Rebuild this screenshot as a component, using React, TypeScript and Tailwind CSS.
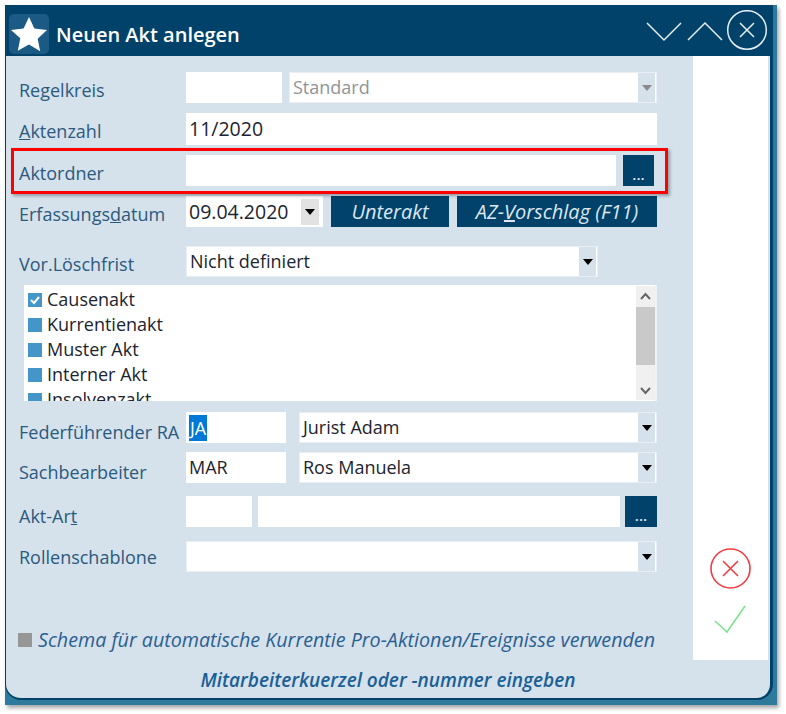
import type { ReactNode } from 'react'

const font = { fontFamily: '"Open Sans", "Noto Sans", sans-serif' }

function Label({ children, className = 'pt-[6px]' }: { children: ReactNode; className?: string }) {
  return (
    <div className={`w-[180px] h-[31px] shrink-0 pl-[13px] text-[18px] leading-[25px] text-[#2b5a7f] whitespace-nowrap ${className}`}>
      {children}
    </div>
  )
}

function Field({ className, children }: { className: string; children?: ReactNode }) {
  return (
    <div className={`h-[31px] shrink-0 bg-white flex items-center pl-[3px] text-[18px] text-[#1c2430] ${className}`}>
      {children}
    </div>
  )
}

function Arrow({ muted }: { muted?: boolean }) {
  return (
    <svg width="12" height="6" viewBox="0 0 12 6">
      <path d="M1 0h10L6 6z" fill={muted ? '#8a8a8a' : '#000'} />
    </svg>
  )
}

function Combo({ className, text, muted }: { className: string; text?: string; muted?: boolean }) {
  return (
    <div className={`h-[31px] shrink-0 bg-white border border-[#e9eff4] flex items-center justify-between text-[18px] ${className}`}>
      <span className={`pl-[3px] ${muted ? 'text-[#8f9499]' : 'text-[#1c2430]'}`}>{text}</span>
      <span className="w-[17px] h-full bg-[#d5e1eb] flex items-center justify-center mr-[1px]">
        <Arrow muted={muted} />
      </span>
    </div>
  )
}

function DotsButton({ className }: { className: string }) {
  return (
    <div className={`h-[31px] shrink-0 bg-[#01426a] text-[#dfe9f1] flex items-end justify-center pb-[2px] text-[15px] font-semibold leading-[20px] ${className}`}>
      ...
    </div>
  )
}

function ActionButton({ className, children }: { className: string; children: ReactNode }) {
  return (
    <div className={`h-[31px] shrink-0 bg-[#01426a] text-[#dce7f0] flex items-center justify-center text-[20px] italic ${className}`}>
      {children}
    </div>
  )
}

const listItems = ['Causenakt', 'Kurrentienakt', 'Muster Akt', 'Interner Akt', 'Insolvenzakt']

export default function App() {
  return (
    <div className="w-[786px] h-[714px] bg-white pt-[5px] pl-[5px] overflow-hidden" style={font}>
      <div className="w-[772px] h-[700px] bg-[#2e7a9c] shadow-[2px_3px_4px_rgba(0,0,0,0.35)]">
        {/* Title bar */}
        <div className="w-[768px] h-[51px] bg-[#01426a] flex items-center">
          <div className="ml-[4px] mt-[7px] w-[40px] h-[40px] rounded-[5px] bg-[#1b5a85] flex items-center justify-center">
            <svg width="38" height="36" viewBox="0 0 38 36">
              <path d="M19 1l5.4 11.6 12.6 1.5-9.3 8.7 2.5 12.5L19 28.6 7.8 34.8l2.5-12.5L1 14.1l12.6-1.5z" fill="#fff" />
            </svg>
          </div>
          <span className="ml-[7px] mt-[8px] text-[20px] font-semibold text-white">Neuen Akt anlegen</span>
          <svg className="ml-auto mr-[5px]" width="122" height="42" viewBox="0 0 122 42" fill="none" stroke="#e6eef4" strokeWidth="1.5">
            <path d="M1 13l17 17 17-17" />
            <path d="M42 30l17-17 17 17" />
            <circle cx="101" cy="20" r="19.3" />
            <path d="M94 13l14 14M108 13L94 27" />
          </svg>
        </div>

        {/* Body */}
        <div className="w-[768px] h-[644px] bg-[#d5e1eb] border-x border-b-2 border-[#01426a] border-r-[3px] rounded-b-[16px] flex flex-col">
          <div className="h-[604px] flex shrink-0">
            <div className="w-[687px] pt-[16px]">
              <div className="flex">
                <Label>Regelkreis</Label>
                <Field className="w-[96px]" />
                <Combo className="w-[368px] ml-[7px]" text="Standard" muted />
              </div>
              <div className="flex mt-[10px]">
                <Label>
                  <u>A</u>ktenzahl
                </Label>
                <Field className="w-[471px] !h-[32px] text-[19.5px]">11/2020</Field>
              </div>
              <div className="flex mt-[10px]">
                <Label>Aktordner</Label>
                <Field className="w-[430px]" />
                <DotsButton className="w-[31px] ml-[7px]" />
              </div>
              <div className="flex mt-[10px]">
                <Label>
                  Erfassungs<u>d</u>atum
                </Label>
                <Field className="w-[137px] justify-between pr-[4px] text-[19.5px]">
                  09.04.2020
                  <span className="w-[18px] h-[26px] bg-[#e2e2e2] flex items-center justify-center">
                    <Arrow />
                  </span>
                </Field>
                <ActionButton className="w-[118px] ml-[8px]">Unterakt</ActionButton>
                <ActionButton className="w-[200px] ml-[8px]">
                  <span>
                    AZ-<u>V</u>orschlag (F11)
                  </span>
                </ActionButton>
              </div>
              <div className="flex mt-[19px]">
                <Label>Vor.Löschfrist</Label>
                <Combo className="w-[412px]" text="Nicht definiert" />
              </div>

              {/* Akt type list */}
              <div className="ml-[18px] mt-[8px] w-[633px] h-[116px] bg-white border-r-2 border-[#eef3f7] flex overflow-hidden">
                <div className="flex-1 pl-[4px] pt-[2px]">
                  {listItems.map((item, index) => (
                    <div key={item} className="h-[25px] flex items-center gap-[5px] text-[18px] text-[#1c2430]">
                      <span className="w-[14px] h-[14px] bg-[#4496c8] flex items-center justify-center">
                        {index === 0 && (
                          <svg width="12" height="12" viewBox="0 0 12 12" fill="none" stroke="#fff" strokeWidth="2">
                            <path d="M2 6l3 3 5-6" />
                          </svg>
                        )}
                      </span>
                      {item}
                    </div>
                  ))}
                </div>
                <div className="w-[19px] my-[1px] bg-[#f0f0f0] flex flex-col items-center">
                  <svg className="mt-[6px]" width="11" height="9" viewBox="0 0 11 9" fill="none" stroke="#666" strokeWidth="2">
                    <path d="M1 7l4.5-5L10 7" />
                  </svg>
                  <div className="mt-[6px] w-full h-[58px] bg-[#c9c9c9]" />
                  <svg className="mt-auto mb-[5px]" width="11" height="9" viewBox="0 0 11 9" fill="none" stroke="#666" strokeWidth="2">
                    <path d="M1 2l4.5 5L10 2" />
                  </svg>
                </div>
              </div>

              <div className="flex mt-[11px]">
                <Label className="pt-[8px]">Federführender RA</Label>
                <Field className="w-[100px]">
                  <span className="h-[26px] px-[1px] bg-[#0078d7] text-white leading-[26px]">JA</span>
                </Field>
                <Combo className="w-[358px] ml-[13px]" text="Jurist Adam" />
              </div>
              <div className="flex mt-[9px]">
                <Label className="pt-[8px]">Sachbearbeiter</Label>
                <Field className="w-[100px]">MAR</Field>
                <Combo className="w-[358px] ml-[13px]" text="Ros Manuela" />
              </div>
              <div className="flex mt-[13px]">
                <Label className="pt-[8px]">
                  Akt-Ar<u>t</u>
                </Label>
                <Field className="w-[66px]" />
                <Field className="w-[362px] ml-[6px]" />
                <DotsButton className="w-[32px] ml-[5px]" />
              </div>
              <div className="flex mt-[14px]">
                <Label className="pt-[4px]">Rollenschablone</Label>
                <Combo className="w-[471px]" />
              </div>

              <div className="mt-[54px] ml-[12px] flex items-center gap-[6px] text-[19.7px] leading-[28px] italic text-[#2a6092] whitespace-nowrap">
                <span className="w-[14px] h-[14px] bg-[#969696] shrink-0" />
                Schema für automatische Kurrentie Pro-Aktionen/Ereignisse verwenden
              </div>
            </div>

            {/* Cancel / OK column */}
            <div className="w-[75px] bg-white flex flex-col items-center justify-end pb-[26px]">
              <svg width="41" height="41" viewBox="0 0 41 41" fill="none" stroke="#f13c42" strokeWidth="1.6">
                <circle cx="20.5" cy="20.5" r="19.5" />
                <path d="M13 13l15 15M28 13L13 28" />
              </svg>
              <svg className="mt-[16px] mr-[2px]" width="32" height="29" viewBox="0 0 32 29" fill="none" stroke="#7fe28c" strokeWidth="1.6">
                <path d="M1 16l12 11L31 1" />
              </svg>
            </div>
          </div>

          <div className="flex-1 flex items-center justify-center pt-[2px] text-[19px] font-semibold italic text-[#1a5f96]">
            Mitarbeiterkuerzel oder -nummer eingeben
          </div>
        </div>
      </div>

      {/* Annotation around the Aktordner row */}
      <div className="absolute left-[11px] top-[148px] w-[657px] h-[46px] border-[3px] border-[#ff0000] shadow-[2px_2px_3px_rgba(0,0,0,0.3)]" />
    </div>
  )
}
